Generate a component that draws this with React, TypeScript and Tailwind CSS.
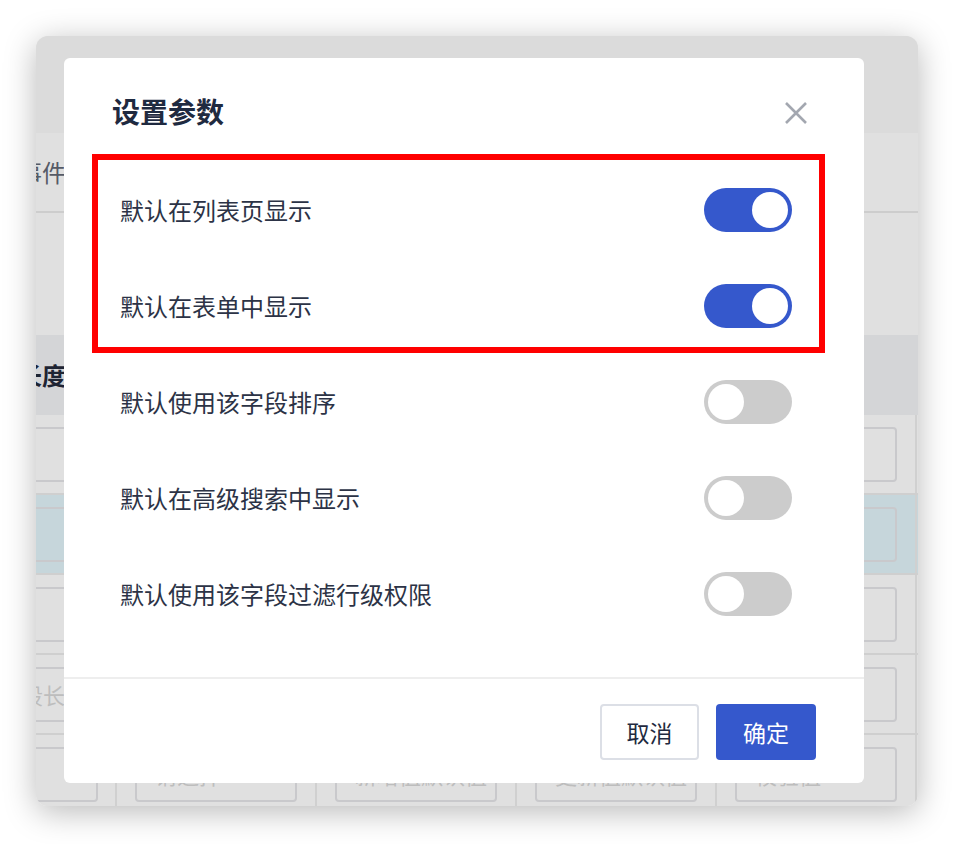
import React from "react";

const FONT = "font-['Noto_Sans_CJK_SC','Noto_Sans',sans-serif]";

function Toggle({ on }: { on: boolean }) {
  return (
    <div
      className={
        on
          ? "flex h-[44px] w-[88px] items-center justify-end rounded-full bg-[#3558cc] p-[4px]"
          : "flex h-[44px] w-[88px] items-center justify-start rounded-full bg-[#cccccc] p-[4px]"
      }
    >
      <div className="h-[36px] w-[36px] rounded-full bg-white" />
    </div>
  );
}

function BgBox({ text, first }: { text?: string; first?: boolean }) {
  return (
    <div
      className={
        first
          ? "ml-[-20px] mr-[17px] flex h-[55px] flex-1 items-center whitespace-nowrap rounded-[4px] border-2 border-[#c9c9cc] pl-[3px] text-[22px] text-[#bdbdbd]"
          : "mx-[18px] flex h-[55px] flex-1 items-center overflow-hidden whitespace-nowrap rounded-[4px] border-2 border-[#c9c9cc] pl-[18px] text-[22px] text-[#bdbdbd]"
      }
    >
      {text}
    </div>
  );
}

function BgRow({ blue, texts }: { blue?: boolean; texts: string[] }) {
  return (
    <div
      className={
        blue
          ? "flex h-[80px] shrink-0 border-b-2 border-[#cfcfcf] bg-[#c6d6db]"
          : "flex h-[80px] shrink-0 border-b-2 border-[#cfcfcf] bg-[#e0e0e0]"
      }
    >
      <div className="flex w-[81px] items-center border-r-2 border-[#d0d0d0]">
        <BgBox first text={texts[0]} />
      </div>
      {[1, 2, 3, 4].map((i) => (
        <div key={i} className="flex w-[200px] items-center border-r-2 border-[#d0d0d0]">
          <BgBox text={texts[i]} />
        </div>
      ))}
    </div>
  );
}

const items = [
  { label: "默认在列表页显示", on: true },
  { label: "默认在表单中显示", on: true },
  { label: "默认使用该字段排序", on: false },
  { label: "默认在高级搜索中显示", on: false },
  { label: "默认使用该字段过滤行级权限", on: false },
];

export default function App() {
  return (
    <div className={`h-[844px] w-[954px] overflow-hidden bg-white pl-[36px] pt-[36px] ${FONT}`}>
      <div className="relative h-[770px] w-[882px] rounded-[12px] shadow-[0_6px_32px_rgba(0,0,0,0.28)]">
        {/* dimmed page behind the dialog */}
        <div className="flex h-full w-full flex-col overflow-hidden rounded-[12px] bg-[#e0e0e0]">
          <div className="h-[97px] shrink-0 bg-[#dbdbdb]" />
          <div className="flex h-[80px] shrink-0 items-center border-b-2 border-[#cdcdcd] bg-[#e0e0e0]">
            <span className="ml-[-18px] whitespace-nowrap text-[24px] text-[#555a66]">事件</span>
          </div>
          <div className="h-[122px] shrink-0 bg-[#e0e0e0]" />
          <div className="flex h-[80px] shrink-0 items-center bg-[#d4d5d7]">
            <span className="ml-[-18px] whitespace-nowrap text-[24px] font-semibold text-[#1e2433]">长度</span>
          </div>
          <BgRow texts={["", "", "", "", ""]} />
          <BgRow blue texts={["", "", "", "", ""]} />
          <BgRow texts={["", "", "", "", ""]} />
          <BgRow texts={["段长", "", "", "", ""]} />
          <BgRow texts={["", "请选择", "新增值默认值", "更新值默认值", "校验值"]} />
        </div>

        {/* dialog */}
        <div className="absolute left-[28px] top-[22px] flex h-[725px] w-[800px] flex-col rounded-[6px] bg-white">
          <div className="flex h-[104px] shrink-0 items-start justify-between pl-[48px] pr-[56px] pt-[33px]">
            <span className="text-[28px] font-semibold leading-[40px] text-[#1f2a40]">设置参数</span>
            <svg width="24" height="24" viewBox="0 0 24 24" className="mt-[10px]">
              <path d="M2 2 L22 22 M22 2 L2 22" stroke="#a3a7b0" strokeWidth="2.6" strokeLinecap="butt" />
            </svg>
          </div>
          <div className="flex flex-col pl-[56px] pr-[72px]">
            {items.map((it) => (
              <div key={it.label} className="flex h-[96px] items-center justify-between">
                <span className="text-[24px] leading-[32px] text-[#2c3346]">{it.label}</span>
                <Toggle on={it.on} />
              </div>
            ))}
          </div>
          <div className="mt-auto flex h-[106px] shrink-0 items-start justify-end gap-[17px] border-t-2 border-[#eeeeee] pr-[48px] pt-[25px]">
            <button className="flex h-[56px] w-[99px] items-center justify-center rounded-[4px] border-2 border-[#dcdfe6] bg-white text-[23px] text-[#1f2a40]">
              取消
            </button>
            <button className="flex h-[56px] w-[100px] items-center justify-center rounded-[4px] bg-[#3558cc] text-[23px] text-white">
              确定
            </button>
          </div>

          {/* red annotation frame */}
          <div className="pointer-events-none absolute left-[28px] top-[96px] h-[199px] w-[733px] border-[6px] border-[#ff0000]" />
        </div>
      </div>
    </div>
  );
}
